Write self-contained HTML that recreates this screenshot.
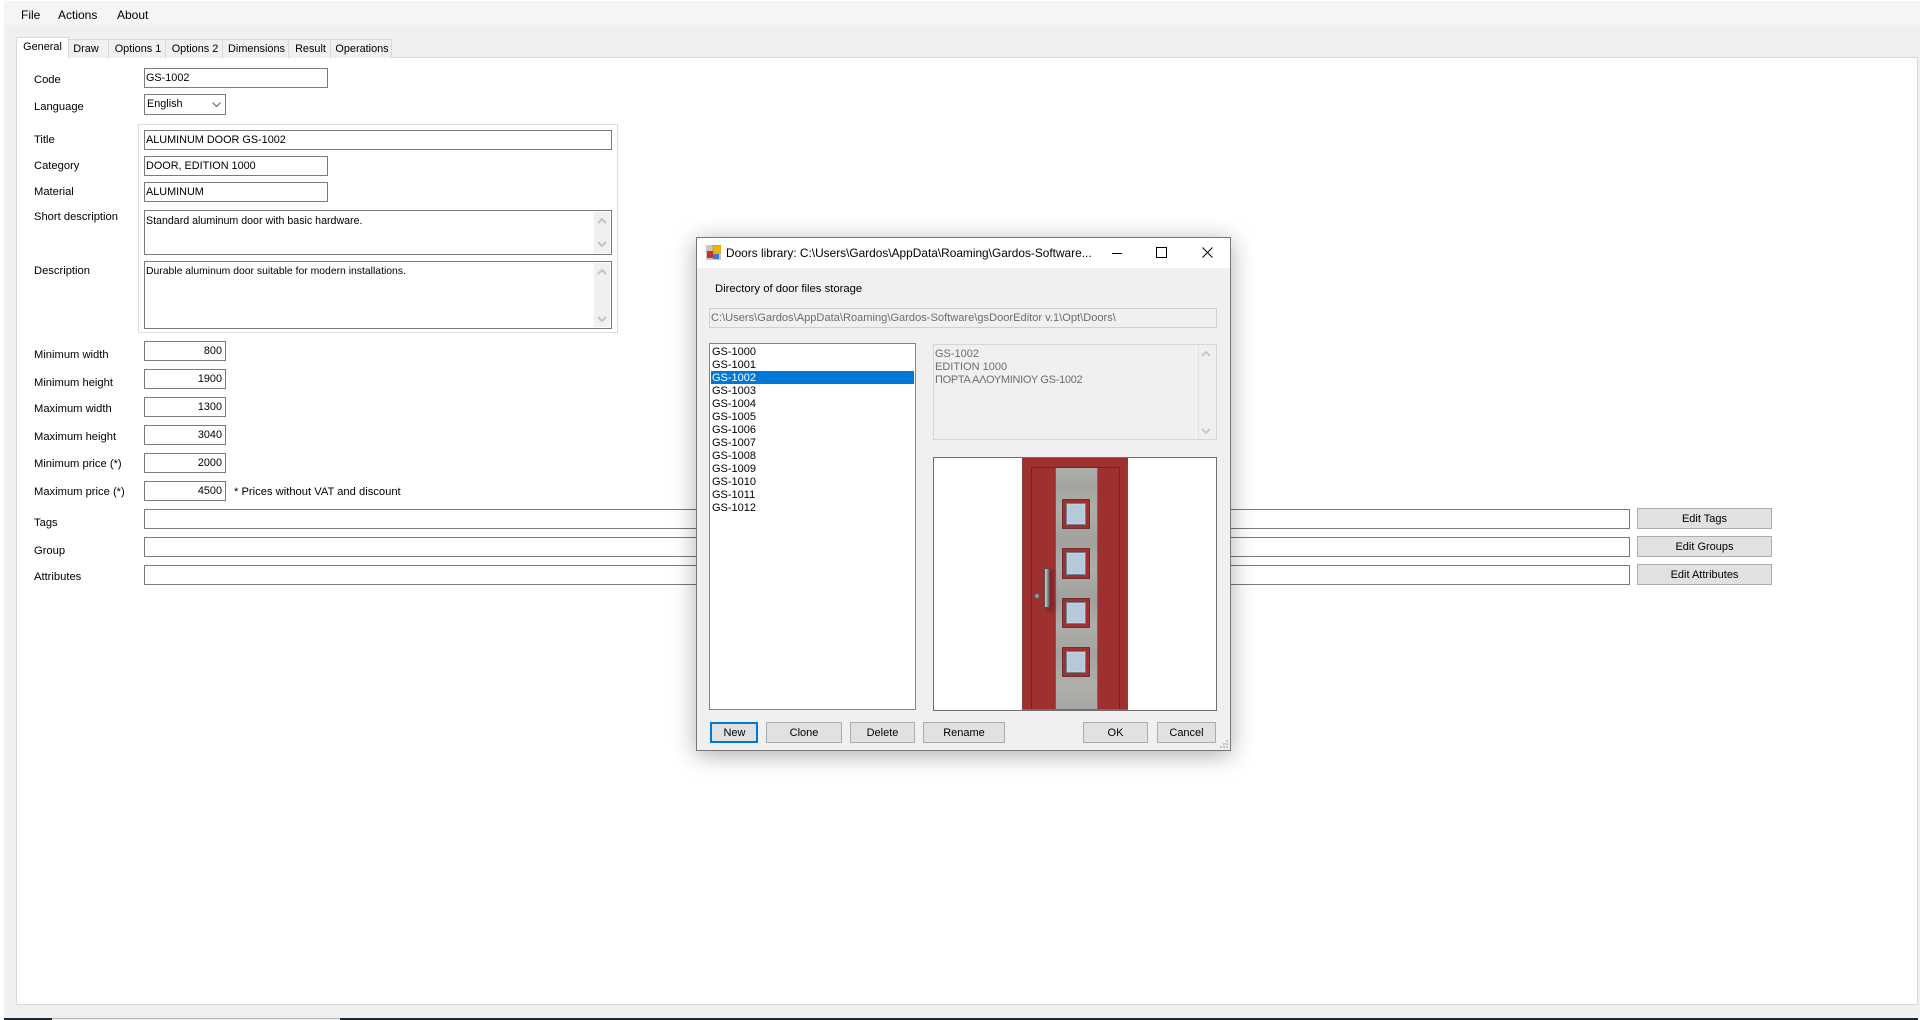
<!DOCTYPE html>
<html lang="en"><head><meta charset="utf-8"><title>gsDoorEditor</title>
<style>
*{box-sizing:border-box}
html,body{margin:0;padding:0;width:1920px;height:1020px;overflow:hidden;background:#fff}
body{position:relative;font-family:"Liberation Sans",sans-serif;font-size:11px;color:#000}
div,span{position:absolute}
.t{white-space:nowrap;line-height:14px;height:14px;font-size:11.2px}
.i{background:#fff;border:1px solid #7a7a7a;white-space:nowrap;line-height:18px;padding:0 0 0 1px;font-size:10.85px}
.n{left:144px;width:82px;height:20px;text-align:right;padding:0 3px 0 0}
.tab{top:39px;height:19px;background:#f0f0f0;border:1px solid #d9d9d9;border-bottom:0;text-align:center;line-height:18px;white-space:nowrap;padding-left:2px;font-size:10.9px}
.b{background:#e1e1e1;border:1px solid #adadad;text-align:center;white-space:nowrap;top:722px;height:21px;line-height:20px}
.b2{left:1637px;width:135px;height:21px;line-height:20px;background:#e1e1e1;border:1px solid #adadad;text-align:center;white-space:nowrap}
.li{left:711px;width:203px;height:13px;line-height:15px;padding-left:1px;white-space:nowrap}
.sb{background:#f0f0f0}
.w{left:1062px;width:28px;background:#9e3030;border:1px solid #6d2f32}
.g{left:3px;right:3px;top:3px;bottom:3px;background:#b5c9da;border:1px solid #70808c;box-shadow:inset 0 0 2px #d4e0ea}
</style></head><body>
<div style="left:4px;top:1px;width:1916px;height:1017px;background:#f0f0f0"></div>
<div style="left:4px;top:1px;width:1916px;height:24px;background:#f5f5f5"></div>
<div class="t" style="left:21px;top:8px;font-size:12px">File</div>
<div class="t" style="left:58px;top:8px;font-size:12px">Actions</div>
<div class="t" style="left:117px;top:8px;font-size:12px">About</div>

<!-- tab page -->
<div style="left:16px;top:57px;width:1902px;height:948px;background:#fff;border:1px solid #d9d9d9"></div>
<div class="tab" style="left:68px;width:41px;padding:0 5px 0 0">Draw</div>
<div class="tab" style="left:108px;width:58px">Options 1</div>
<div class="tab" style="left:165px;width:58px">Options 2</div>
<div class="tab" style="left:222px;width:67px">Dimensions</div>
<div class="tab" style="left:288px;width:43px">Result</div>
<div class="tab" style="left:330px;width:62px">Operations</div>
<div class="tab" style="left:16px;top:37px;width:53px;height:21px;background:#fff;line-height:15px;padding:2px 0 0 0">General</div>

<!-- form -->
<div class="t" style="left:34px;top:73px">Code</div>
<div class="i" style="left:144px;top:68px;width:184px;height:20px">GS-1002</div>
<div class="t" style="left:34px;top:100px">Language</div>
<div class="i" style="left:144px;top:94px;width:82px;height:21px;padding-left:2px">English</div>
<svg style="position:absolute;left:212px;top:102px" width="10" height="6"><path d="M0.5 0.5L4.5 4.5L8.5 0.5" fill="none" stroke="#606060"/></svg>

<div style="left:138px;top:124px;width:480px;height:209px;border:1px solid #dcdcdc"></div>
<div class="t" style="left:34px;top:133px">Title</div>
<div class="i" style="left:144px;top:130px;width:468px;height:20px">ALUMINUM DOOR GS-1002</div>
<div class="t" style="left:34px;top:159px">Category</div>
<div class="i" style="left:144px;top:156px;width:184px;height:20px">DOOR, EDITION 1000</div>
<div class="t" style="left:34px;top:185px">Material</div>
<div class="i" style="left:144px;top:182px;width:184px;height:20px">ALUMINUM</div>
<div class="t" style="left:34px;top:210px">Short description</div>
<div class="i" style="left:144px;top:210px;width:468px;height:45px;padding-top:2px;line-height:16px;font-size:10.65px">Standard aluminum door with basic hardware.</div>
<div class="sb" style="left:594px;top:212px;width:16px;height:41px"></div>
<svg style="position:absolute;left:597px;top:217px" width="10" height="32" fill="none" stroke="#c4c4c4" stroke-width="2"><path d="M1 6L5 2L9 6M1 25L5 29L9 25"/></svg>
<div class="t" style="left:34px;top:264px">Description</div>
<div class="i" style="left:144px;top:261px;width:468px;height:68px;padding-top:2px;line-height:16px;font-size:10.4px">Durable aluminum door suitable for modern installations.</div>
<div class="sb" style="left:594px;top:263px;width:16px;height:64px"></div>
<svg style="position:absolute;left:597px;top:268px" width="10" height="56" fill="none" stroke="#c4c4c4" stroke-width="2"><path d="M1 6L5 2L9 6M1 49L5 53L9 49"/></svg>

<div class="t" style="left:34px;top:348px">Minimum width</div>
<div class="i n" style="top:341px">800</div>
<div class="t" style="left:34px;top:376px">Minimum height</div>
<div class="i n" style="top:369px">1900</div>
<div class="t" style="left:34px;top:402px">Maximum width</div>
<div class="i n" style="top:397px">1300</div>
<div class="t" style="left:34px;top:430px">Maximum height</div>
<div class="i n" style="top:425px">3040</div>
<div class="t" style="left:34px;top:457px">Minimum price (*)</div>
<div class="i n" style="top:453px">2000</div>
<div class="t" style="left:34px;top:485px">Maximum price (*)</div>
<div class="i n" style="top:481px">4500</div>
<div class="t" style="left:234px;top:485px">* Prices without VAT and discount</div>

<div class="t" style="left:34px;top:516px">Tags</div>
<div class="i" style="left:144px;top:509px;width:1486px;height:20px"></div>
<div class="b2" style="top:508px">Edit Tags</div>
<div class="t" style="left:34px;top:544px">Group</div>
<div class="i" style="left:144px;top:537px;width:1486px;height:20px"></div>
<div class="b2" style="top:536px">Edit Groups</div>
<div class="t" style="left:34px;top:570px">Attributes</div>
<div class="i" style="left:144px;top:565px;width:1486px;height:20px"></div>
<div class="b2" style="top:564px">Edit Attributes</div>

<!-- taskbar sliver -->
<div style="left:4px;top:1018px;width:48px;height:2px;background:#1f2733"></div>
<div style="left:52px;top:1018px;width:288px;height:2px;background:#f0f0f0;border-top:1px solid #b5b5b5"></div>
<div style="left:340px;top:1018px;width:1578px;height:2px;background:#1f2733"></div>

<!-- dialog -->
<div style="left:696px;top:237px;width:535px;height:514px;background:#f0f0f0;border:1px solid #777;box-shadow:0 4px 22px rgba(0,0,0,.32)"></div>
<div style="left:697px;top:238px;width:533px;height:30px;background:#fff"></div>
<svg style="position:absolute;left:706px;top:245px" width="15" height="15">
<rect x="0" y="0" width="15" height="15" fill="#c8c8c8"/>
<rect x="7" y="0" width="8" height="8" fill="#f5b400" stroke="#a88a30" stroke-width=".6"/>
<rect x="1" y="6" width="6" height="7" fill="#d03020"/>
<rect x="7" y="9" width="6" height="5" fill="#3b78d8"/>
</svg>
<div class="t" style="left:726px;top:246px;font-size:11.88px">Doors library: C:\Users\Gardos\AppData\Roaming\Gardos-Software...</div>
<svg style="position:absolute;left:1105px;top:243px" width="115" height="20" fill="none" stroke="#000" stroke-width="1">
<path d="M7 10.5H17"/><rect x="51.5" y="4.5" width="10" height="10"/><path d="M97.5 4.5L107.5 14.5M107.5 4.5L97.5 14.5"/>
</svg>
<div class="t" style="left:715px;top:282px;font-size:11.28px">Directory of door files storage</div>
<div style="left:709px;top:308px;width:508px;height:20px;background:#f0f0f0;border:1px solid #d0d0d0;color:#6d6d6d;line-height:19px;padding-left:1px;white-space:nowrap;font-size:11.1px">C:\Users\Gardos\AppData\Roaming\Gardos-Software\gsDoorEditor v.1\Opt\Doors\</div>

<div style="left:709px;top:343px;width:207px;height:367px;background:#fff;border:1px solid #828282"></div>
<div class="li" style="top:345px">GS-1000</div>
<div class="li" style="top:358px">GS-1001</div>
<div class="li" style="top:371px;background:#0078d7;color:#fff">GS-1002</div>
<div class="li" style="top:384px">GS-1003</div>
<div class="li" style="top:397px">GS-1004</div>
<div class="li" style="top:410px">GS-1005</div>
<div class="li" style="top:423px">GS-1006</div>
<div class="li" style="top:436px">GS-1007</div>
<div class="li" style="top:449px">GS-1008</div>
<div class="li" style="top:462px">GS-1009</div>
<div class="li" style="top:475px">GS-1010</div>
<div class="li" style="top:488px">GS-1011</div>
<div class="li" style="top:501px">GS-1012</div>

<div style="left:933px;top:344px;width:284px;height:96px;background:#f0f0f0;border:1px solid #d6d6d6"></div>
<div class="t" style="left:935px;top:348px;color:#6d6d6d;line-height:13px;font-size:11px">GS-1002</div>
<div class="t" style="left:935px;top:361px;color:#6d6d6d;line-height:13px;font-size:11px">EDITION 1000</div>
<div class="t" style="left:935px;top:374px;color:#6d6d6d;line-height:13px;font-size:11px;letter-spacing:-.3px;font-family:'Liberation Sans','Noto Sans CJK JP',sans-serif">ΠΟΡΤΑ ΑΛΟΥΜΙΝΙΟΥ GS-1002</div>
<div style="left:1198px;top:345px;width:1px;height:94px;background:#e2e2e2"></div>
<svg style="position:absolute;left:1201px;top:350px" width="10" height="86" fill="none" stroke="#c8c8c8" stroke-width="2"><path d="M1 6L5 2L9 6M1 79L5 83L9 79"/></svg>

<div style="left:933px;top:457px;width:284px;height:254px;background:#fff;border:1px solid #6f6f6f"></div>
<!-- door -->
<div style="left:1022px;top:458px;width:106px;height:252px;background:#9e3030;border-left:1px solid #87403f;border-right:1px solid #87403f;border-bottom:1px solid #7c6868"></div>
<div style="left:1031px;top:467px;width:89px;height:242px;border:1px solid #6a2a2c;border-bottom:0"></div>
<div style="left:1055px;top:468px;width:43px;height:241px;border-left:1px solid #7a5a5a;border-right:1px solid #6d6d6d;background:linear-gradient(180deg,#aeaeab 0%,#a3a3a0 8%,#adadaa 18%,#a1a19e 30%,#adadaa 42%,#9f9f9c 55%,#adadaa 65%,#a2a29f 78%,#afafac 90%,#a6a6a4 100%)"></div>
<div class="w" style="top:499px;height:30px"><div class="g"></div></div>
<div class="w" style="top:548px;height:31px"><div class="g"></div></div>
<div class="w" style="top:598px;height:30px"><div class="g"></div></div>
<div class="w" style="top:647px;height:30px"><div class="g"></div></div>
<div style="left:1047px;top:570px;width:7px;height:42px;background:#822526;filter:blur(1.5px)"></div>
<div style="left:1044px;top:568px;width:6px;height:40px;background:linear-gradient(90deg,#d8d8d8,#9a9a9a 50%,#6a6a6a);border:1px solid #5a4a4a"></div>
<div style="left:1035px;top:594px;width:4px;height:4px;border-radius:50%;background:#8a9aa8;outline:1px solid #6e4a50"></div>

<!-- buttons -->
<div class="b" style="left:710px;width:48px;border:2px solid #0078d7;line-height:18px;padding-left:1px">New</div>
<div class="b" style="left:766px;width:76px">Clone</div>
<div class="b" style="left:850px;width:65px">Delete</div>
<div class="b" style="left:923px;width:82px">Rename</div>
<div class="b" style="left:1083px;width:65px">OK</div>
<div class="b" style="left:1157px;width:59px">Cancel</div>
<svg style="position:absolute;left:1220px;top:740px" width="9" height="9" fill="#c4c4c4"><rect x="6" y="0" width="2" height="2"/><rect x="3" y="3" width="2" height="2"/><rect x="6" y="3" width="2" height="2"/><rect x="0" y="6" width="2" height="2"/><rect x="3" y="6" width="2" height="2"/><rect x="6" y="6" width="2" height="2"/></svg>
</body></html>
